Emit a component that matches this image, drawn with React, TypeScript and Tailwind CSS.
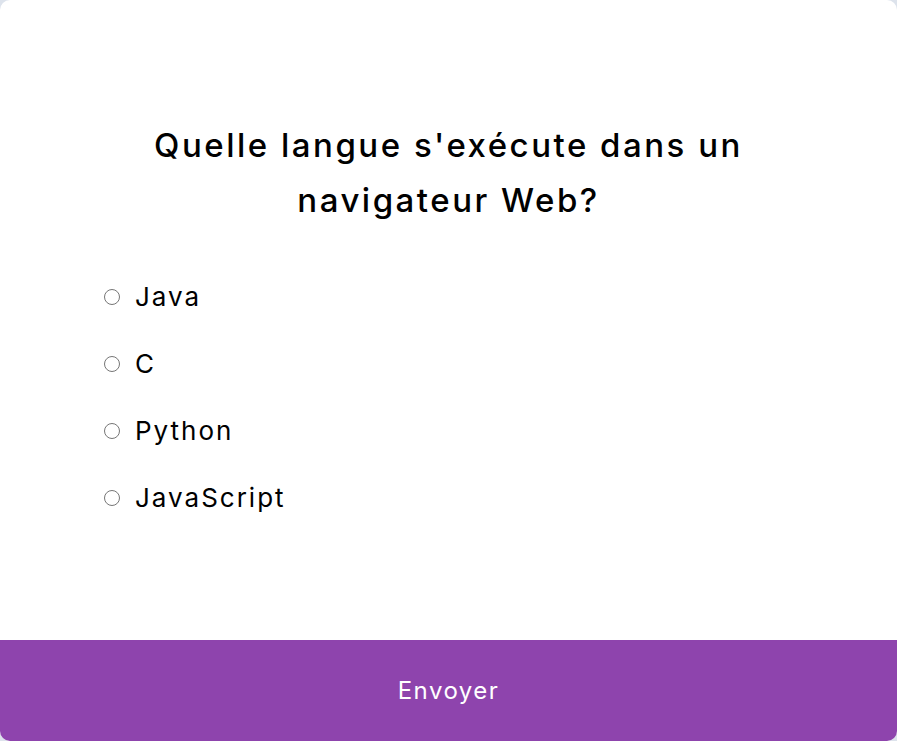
import React from "react";

const options = ["Java", "C", "Python", "JavaScript"];

export default function App() {
  return (
    <div className="h-[741px] w-[897px] bg-[#dde3ec]" style={{ fontFamily: "Inter, 'DejaVu Sans', sans-serif" }}>
      <div className="flex h-full flex-col overflow-hidden rounded-[10px] bg-white">
        <div className="flex-1 px-[104px] pt-[118px]">
          <h2 className="mx-auto text-center text-[33px] font-medium leading-[55px] tracking-[2.5px] text-black">
            Quelle langue s'exécute dans un
            <br />
            navigateur Web?
          </h2>
          <ul className="mt-[53px] flex flex-col gap-[35px]">
            {options.map((o) => (
              <li key={o} className="flex h-[32px] items-center">
                <span className="mr-[15px] h-[16px] w-[16px] rounded-full border border-[#767676] bg-white" />
                <span className="text-[26px] leading-[32px] tracking-[2px] text-black">{o}</span>
              </li>
            ))}
          </ul>
        </div>
        <button className="h-[101px] w-full bg-[#8e44ad] text-[24px] tracking-[1.5px] text-white">Envoyer</button>
      </div>
    </div>
  );
}
